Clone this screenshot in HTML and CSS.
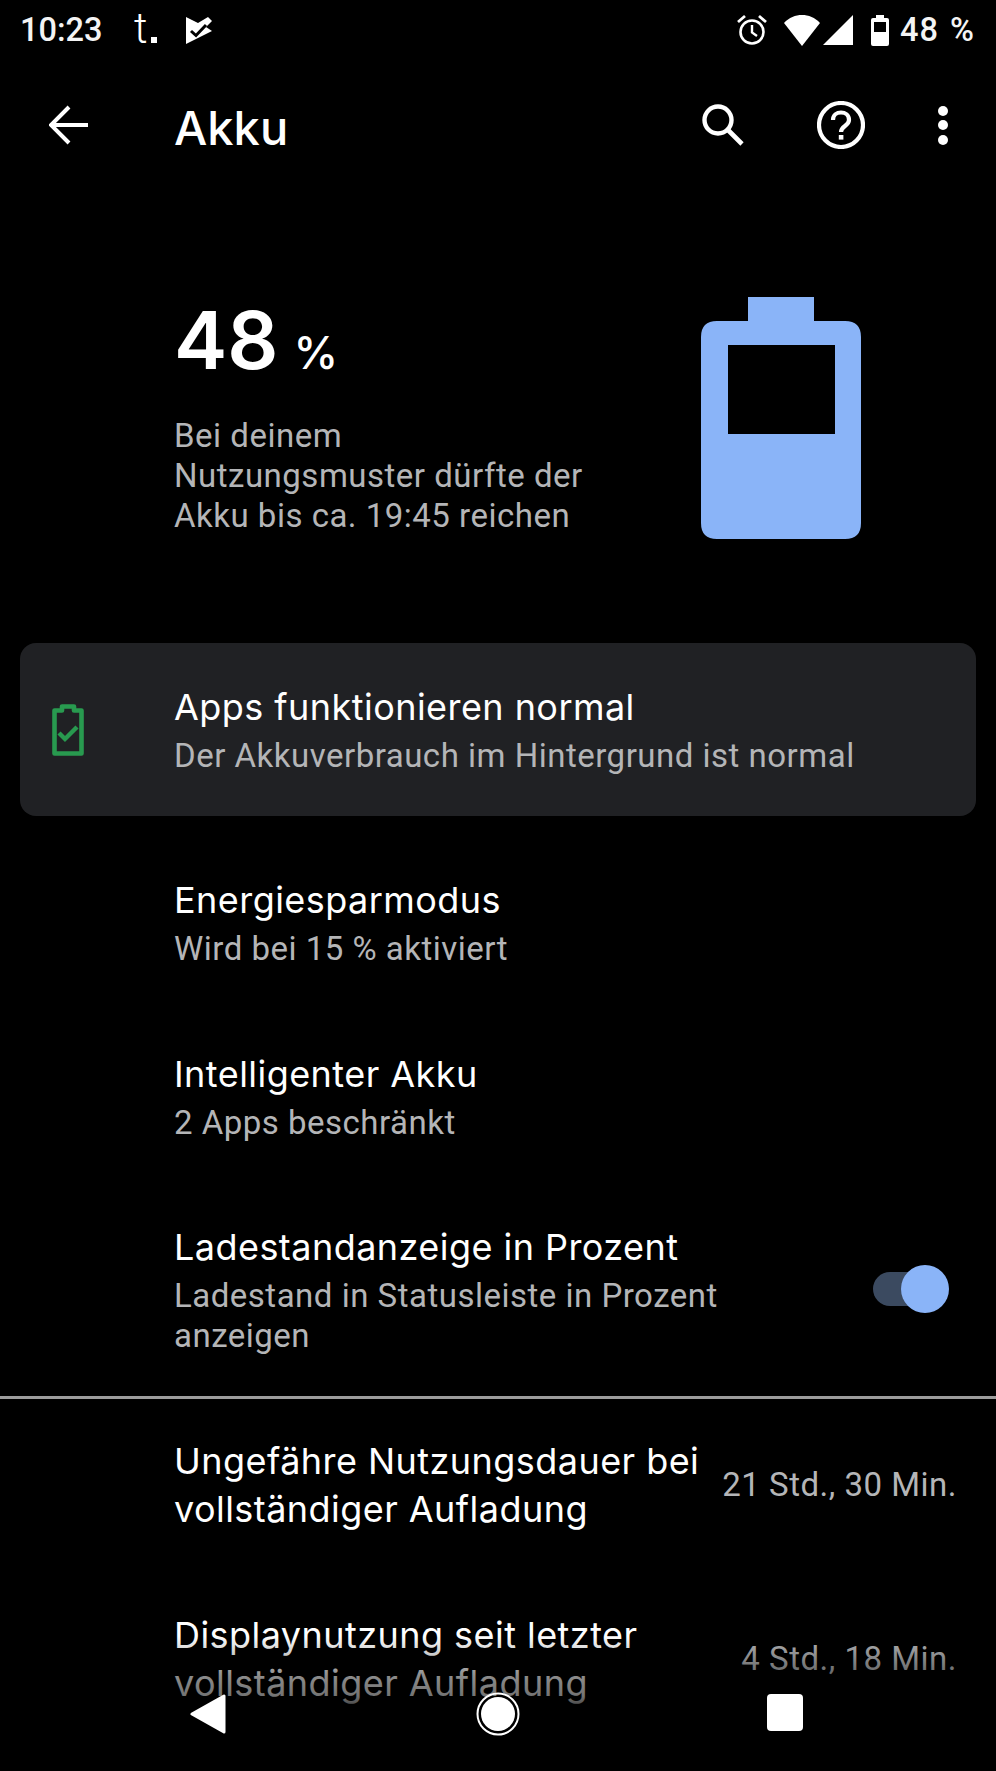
FILE: index.html
```html
<!DOCTYPE html>
<html lang="de">
<head>
    <meta charset="UTF-8">
    <meta name="viewport" content="width=device-width, initial-scale=1.0">
    <title>Akku</title>
    <link rel="stylesheet" href="styles.css">
</head>
<body>
    <div class="screen">
        <!-- Status bar -->
        <div class="status-bar">
            <span class="clock">10:23</span>
            <span class="carrier">t<span class="carrier-dot"></span></span>
            <svg class="play-check" width="26" height="27" viewBox="0 0 26 27">
                <path d="M0 0 L12 6 L22 0 L26 4 L20 10 L26 14 L0 27 Z" fill="#fff"/>
                <path d="M5 14 L10 18.5 L20 8" fill="none" stroke="#000" stroke-width="3"/>
            </svg>
            <div class="status-right">
                <svg class="st-alarm" width="30" height="32" viewBox="0 0 30 32">
                    <circle cx="15" cy="18" r="11.5" fill="none" stroke="#fff" stroke-width="2.6"/>
                    <path d="M15 11 V18.5 L20 22" fill="none" stroke="#fff" stroke-width="2.4"/>
                    <path d="M1 8 L8 2 M29 8 L22 2" fill="none" stroke="#fff" stroke-width="2.8"/>
                </svg>
                <svg class="st-wifi" width="36" height="31" viewBox="0 0 36 31">
                    <path d="M0 8 C10 -2.6 26 -2.6 36 8 L18 31 Z" fill="#fff"/>
                </svg>
                <svg class="st-signal" width="30" height="30" viewBox="0 0 30 30">
                    <path d="M30 0 V30 H0 Z" fill="#fff"/>
                </svg>
                <svg class="st-battery" width="18" height="31" viewBox="0 0 18 31">
                    <path d="M5 0 H13 V3 H16 Q18 3 18 5 V29 Q18 31 16 31 H2 Q0 31 0 29 V5 Q0 3 2 3 H5 Z M3 7 V17 H15 V7 Z" fill="#fff" fill-rule="evenodd"/>
                </svg>
                <span class="st-percent">48 %</span>
            </div>
        </div>

        <!-- Toolbar -->
        <div class="toolbar">
            <svg class="tb-back" width="40" height="40" viewBox="0 0 40 40">
                <path d="M39 20 H3 M20 2 L2 20 L20 38" fill="none" stroke="#fff" stroke-width="4"/>
            </svg>
            <h1 class="tb-title">Akku</h1>
            <svg class="tb-search" width="42" height="42" viewBox="0 0 42 42">
                <circle cx="16" cy="16" r="13.5" fill="none" stroke="#fff" stroke-width="4.4"/>
                <path d="M26 26 L40 40" fill="none" stroke="#fff" stroke-width="4.6"/>
            </svg>
            <svg class="tb-help" width="48" height="48" viewBox="0 0 48 48">
                <circle cx="24" cy="24" r="22" fill="none" stroke="#fff" stroke-width="4.2"/>
                <path d="M16 19 C16 9 32 9 32 19 C32 25 24 25 24 31" fill="none" stroke="#fff" stroke-width="4.2"/>
                <rect x="21.8" y="34" width="4.6" height="4.6" fill="#fff"/>
            </svg>
            <div class="tb-more"><i></i><i></i><i></i></div>
        </div>

        <!-- Battery summary -->
        <div class="hero">
            <div class="hero-text">
                <div class="hero-level"><span class="hero-num">48</span><span class="hero-unit">%</span></div>
                <div class="hero-desc">Bei deinem<br>Nutzungsmuster dürfte der<br>Akku bis ca. 19:45 reichen</div>
            </div>
            <svg class="hero-battery" width="160" height="242" viewBox="0 0 160 242">
                <path d="M47 0 H113 V24 H144 Q160 24 160 40 V226 Q160 242 144 242 H16 Q0 242 0 226 V40 Q0 24 16 24 H47 Z M27 48 V137 H134 V48 Z" fill="#8ab4f8" fill-rule="evenodd"/>
            </svg>
        </div>

        <!-- Status card -->
        <div class="card">
            <svg class="card-icon" width="32" height="52" viewBox="0 0 32 52">
                <path d="M10 2.5 H22 V6.5 H29.5 V49.5 H2.5 V6.5 H10 Z" fill="none" stroke="#289a4f" stroke-width="4.6" stroke-linejoin="round"/>
                <path d="M7 29 L13 35 L25 23" fill="none" stroke="#289a4f" stroke-width="4.4"/>
            </svg>
            <div class="row-text">
                <div class="row-title">Apps funktionieren normal</div>
                <div class="row-sub">Der Akkuverbrauch im Hintergrund ist normal</div>
            </div>
        </div>

        <!-- Settings -->
        <div class="row">
            <div class="row-text">
                <div class="row-title">Energiesparmodus</div>
                <div class="row-sub">Wird bei 15 % aktiviert</div>
            </div>
        </div>
        <div class="row">
            <div class="row-text">
                <div class="row-title">Intelligenter Akku</div>
                <div class="row-sub">2 Apps beschränkt</div>
            </div>
        </div>
        <div class="row row-last">
            <div class="row-text row-text-switch">
                <div class="row-title">Ladestandanzeige in Prozent</div>
                <div class="row-sub">Ladestand in Statusleiste in Prozent anzeigen</div>
            </div>
            <div class="switch"><div class="switch-thumb"></div></div>
        </div>

        <div class="divider"></div>

        <div class="row row-info">
            <div class="row-title info-title">Ungefähre Nutzungsdauer bei vollständiger Aufladung</div>
            <div class="row-value">21 Std., 30 Min.</div>
        </div>
        <div class="row row-info">
            <div class="row-title info-title">Displaynutzung seit letzter vollständiger Aufladung</div>
            <div class="row-value">4 Std., 18 Min.</div>
        </div>

        <!-- Navigation bar lies over the list -->
        <div class="nav-bar">
            <svg class="nav-back" width="36" height="40" viewBox="0 0 36 40">
                <path d="M34 2 V38 L2 20 Z" fill="#fff" stroke="#fff" stroke-width="3" stroke-linejoin="round"/>
            </svg>
            <svg class="nav-home" width="44" height="44" viewBox="0 0 44 44">
                <circle cx="22" cy="22" r="20.5" fill="none" stroke="#fff" stroke-width="2"/>
                <circle cx="22" cy="22" r="17" fill="#fff"/>
            </svg>
            <div class="nav-recent"></div>
        </div>
    </div>
</body>
</html>
```
FILE: styles.css
```css
* {
    box-sizing: border-box;
}
html, body {
    margin: 0;
    background-color: #000;
}
.screen {
    position: relative;
    width: 996px;
    height: 1771px;
    overflow: hidden;
    color: #fff;
    font-family: Roboto, "Liberation Sans", sans-serif;
}

/* Status bar */
.status-bar {
    display: flex;
    align-items: center;
    height: 60px;
    padding: 0 19px 0 20px;
}
.clock {
    font-size: 32.5px;
    font-weight: 500;
    width: 114px;
    color: #f4f4f4;
}
.carrier {
    font-size: 42px;
    font-weight: 300;
    line-height: 1;
    width: 24px;
    display: flex;
    align-items: flex-end;
    margin-top: -2px;
}
.carrier-dot {
    width: 6px;
    height: 6px;
    margin: 0 0 7px 3px;
    background-color: #fff;
}
.play-check {
    margin-left: 28px;
}
.status-right {
    display: flex;
    align-items: center;
    margin-left: auto;
}
.st-alarm {
    margin-right: 17px;
}
.st-signal {
    margin: 0 18px 0 3px;
}
.st-percent {
    font-size: 32.5px;
    font-weight: 500;
    letter-spacing: 1px;
    word-spacing: 2px;
    margin-left: 11px;
    padding-right: 2px;
    color: #f4f4f4;
}

/* Toolbar */
.toolbar {
    display: flex;
    align-items: center;
    height: 134px;
    padding: 0 0 4px 49px;
}
.tb-title {
    margin: 4px 0 0 85px;
    font-family: Inter, Roboto, sans-serif;
    font-size: 47px;
    font-weight: 500;
    flex: 1;
}
.tb-search {
    margin-right: 73px;
}
.tb-help {
    margin-right: 73px;
}
.tb-more {
    display: flex;
    flex-direction: column;
    gap: 4.5px;
    margin-right: 48px;
}
.tb-more i {
    display: block;
    width: 10px;
    height: 10px;
    border-radius: 50%;
    background-color: #fff;
}

/* Battery summary */
.hero {
    display: flex;
    justify-content: space-between;
    padding: 103px 135px 0 174px;
    height: 449px;
}
.hero-text {
    margin-top: -7px;
}
.hero-num {
    font-family: Inter, Roboto, sans-serif;
    font-size: 80px;
    font-weight: 600;
}
.hero-unit {
    font-family: Inter, Roboto, sans-serif;
    font-size: 45px;
    font-weight: 500;
    margin-left: 15px;
}
.hero-level {
    line-height: 100px;
    height: 100px;
}
.hero-desc {
    margin-top: 26px;
    font-size: 33px;
    line-height: 40px;
    letter-spacing: 0.5px;
    color: #b4b5b7;
}

/* Card */
.card {
    display: flex;
    margin: 0 20px;
    height: 173px;
    padding: 40px 0 0 32px;
    background-color: #202124;
    border-radius: 16px;
}
.card-icon {
    margin: 21px 90px 0 0;
}

/* Rows */
.row {
    display: flex;
    padding: 43px 0 37.5px 174px;
    position: relative;
}
.card + .row {
    margin-top: 17px;
}
.row-last {
    padding-bottom: 40px;
}
.row-title {
    font-family: Inter, Roboto, sans-serif;
    font-size: 36px;
    letter-spacing: 0.45px;
    line-height: 48px;
    color: #fff;
}
.row-sub {
    margin-top: 5px;
    font-size: 33px;
    line-height: 40px;
    letter-spacing: 0.5px;
    color: #b4b5b7;
}
.row-text-switch {
    width: 560px;
}
.switch {
    position: relative;
    width: 62px;
    height: 34px;
    margin: 49px 0 0 139px;
    border-radius: 17px;
    background-color: #3b4a60;
}
.switch-thumb {
    position: absolute;
    top: -7px;
    right: -14px;
    width: 48px;
    height: 48px;
    border-radius: 50%;
    background-color: #8ab4f8;
}
.divider {
    height: 3px;
    background-color: #9c9c9c;
}
.row-info {
    padding: 38px 39px 40px 174px;
    align-items: center;
    justify-content: space-between;
}
.info-title {
    width: 540px;
}
.row-value {
    margin-bottom: 2px;
    font-size: 33px;
    letter-spacing: 0.5px;
    color: #b4b5b7;
    white-space: nowrap;
}

/* Navigation bar */
.nav-bar {
    position: absolute;
    left: 0;
    right: 0;
    bottom: 0;
    height: 135px;
    background: linear-gradient(to bottom, rgba(0, 0, 0, 0) 0, rgba(0, 0, 0, 0.45) 40px, rgba(0, 0, 0, 0.55) 60px, #000 85px);
}
.nav-back {
    position: absolute;
    left: 190px;
    top: 58px;
}
.nav-home {
    position: absolute;
    left: 476px;
    top: 56px;
}
.nav-recent {
    position: absolute;
    left: 767px;
    top: 58px;
    width: 36px;
    height: 37px;
    border-radius: 4px;
    background-color: #fff;
}
```
